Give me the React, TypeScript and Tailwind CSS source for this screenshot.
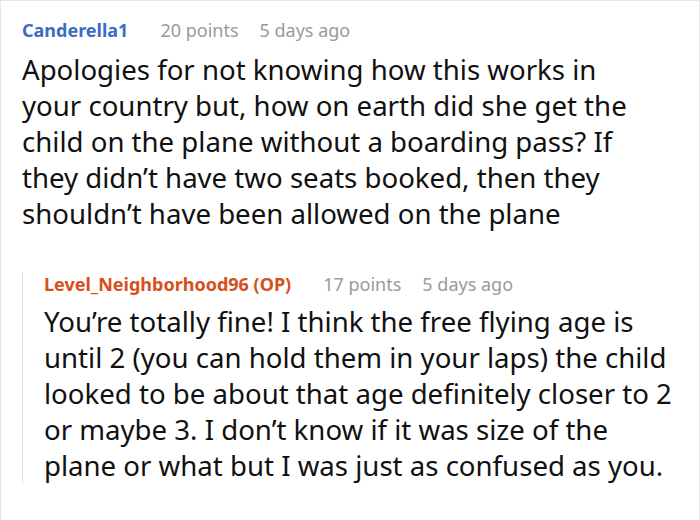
const comment = [
  "Apologies for not knowing how this works in",
  "your country but, how on earth did she get the",
  "child on the plane without a boarding pass? If",
  "they didn’t have two seats booked, then they",
  "shouldn’t have been allowed on the plane",
];

const reply = [
  "You’re totally fine! I think the free flying age is",
  "until 2 (you can hold them in your laps) the child",
  "looked to be about that age definitely closer to 2",
  "or maybe 3. I don’t know if it was size of the",
  "plane or what but I was just as confused as you.",
];

function Lines({ lines }: { lines: string[] }) {
  return (
    <>
      {lines.map((l, i) => (
        <span key={i} className="block whitespace-nowrap">
          {l}
        </span>
      ))}
    </>
  );
}

export default function App() {
  return (
    <div className="w-[700px] h-[520px] bg-white border-t border-l border-r border-[#e6e6e6] overflow-hidden" style={{ fontFamily: '"Noto Sans", sans-serif' }}>
      <div className="pl-[21px] pr-[6px] pt-[17px]">
        <div className="flex items-center text-[18px] leading-[24px]">
          <span className="font-bold text-[#3a6dc2]">Canderella1</span>
          <span className="ml-[32px] text-[#9a9a9a]">20 points</span>
          <span className="ml-[21px] text-[#9a9a9a]">5 days ago</span>
        </div>
        <p className="text-[27.6px] leading-[36px] text-[#111111] mt-[9px]">
          <Lines lines={comment} />
        </p>
      </div>
      <div className="ml-[21px] mt-[51px] border-l border-[#dddddd] pl-[21px] pr-[6px]">
        <div className="-mt-[10px] flex items-center text-[18px] leading-[24px]">
          <span className="font-bold text-[#d6501c]">Level_Neighborhood96 (OP)</span>
          <span className="ml-[32px] text-[#9a9a9a]">17 points</span>
          <span className="ml-[21px] text-[#9a9a9a]">5 days ago</span>
        </div>
        <p className="text-[27.6px] leading-[36px] text-[#111111] mt-[7px]">
          <Lines lines={reply} />
        </p>
      </div>
    </div>
  );
}
